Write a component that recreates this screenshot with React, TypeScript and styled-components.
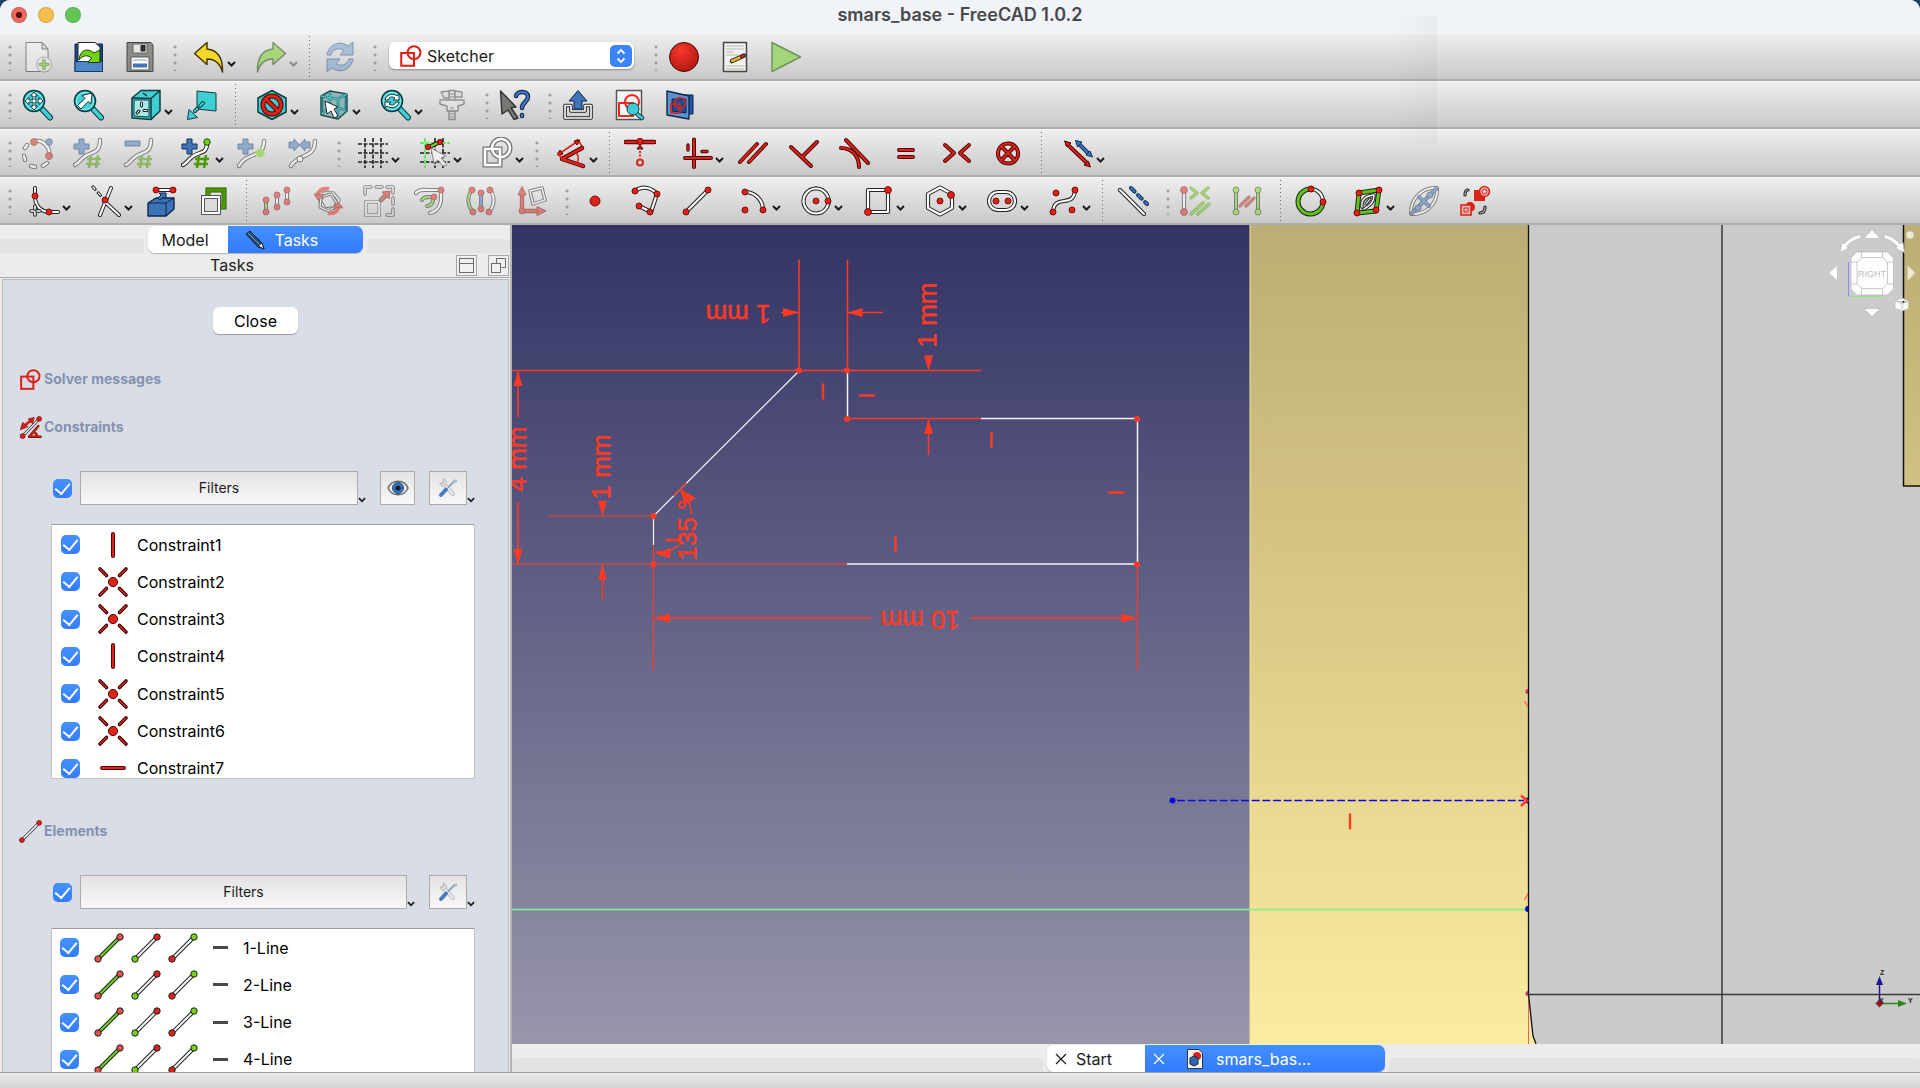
import React, { ReactNode } from 'react';
import styled, { createGlobalStyle, css } from 'styled-components';

const RED = '#dc2318';
const INK = '#1f2426';
const SKETCH = '#ff3a24';
const AQUA = '#3fcfd2';
const BLUE = '#3f74b8';
const GREEN = '#73d216';

const GlobalStyle = createGlobalStyle`
  * { box-sizing: border-box; }
  body {
    margin: 0;
    background: #1d4468;
    font-family: Inter, "Liberation Sans", sans-serif;
    font-size: 16px;
    line-height: 20px;
    color: #1b1b1b;
  }
  button, select, input { font: inherit; color: inherit; margin: 0; }
`;

/* ---------- window frame ---------- */

const Window = styled.div`
  display: flex;
  flex-direction: column;
  height: 100vh;
  overflow: hidden;
  background: #ececec;
  border-radius: 10px 10px 0 0;
`;

const Header = styled.header`
  position: relative;
  flex: none;
  &::after {
    content: '';
    position: absolute;
    top: 16px;
    bottom: 80px;
    right: 483px;
    width: 48px;
    pointer-events: none;
    background: linear-gradient(90deg, rgba(0, 0, 0, 0), rgba(0, 0, 0, 0.03));
  }
`;

const TitleBar = styled.div`
  display: grid;
  grid-template-columns: 1fr auto 1fr;
  align-items: center;
  height: 33px;
  padding: 0 11px 4px;
  background: #f0f3f7;
`;

const Lights = styled.div`
  display: flex;
  gap: 11px;
`;

const Light = styled.button<{ $fill: string }>`
  display: grid;
  place-items: center;
  width: 16px;
  height: 16px;
  padding: 0;
  border: 1px solid rgba(0, 0, 0, 0.12);
  border-radius: 50%;
  background: ${(p) => p.$fill};
`;

const LightDot = styled.span`
  width: 6px;
  height: 6px;
  border-radius: 50%;
  background: #5c0a06;
`;

const Title = styled.h1`
  margin: 0;
  font-size: 18px;
  line-height: 20px;
  font-weight: 600;
  color: #47494b;
`;

/* ---------- tool bars ---------- */

const ToolRow = styled.div`
  display: flex;
  align-items: center;
  height: 48px;
  padding-left: 2px;
  border-top: 1px solid #f6f6f6;
  border-bottom: 2px solid #aeaeae;
  background: linear-gradient(#eeeeee, #c9c9c9);
`;

const Handle = styled.span`
  flex: none;
  width: 12px;
  height: 28px;
  background: radial-gradient(circle, #a0a0a0 1px, transparent 2px) 6px 0 / 4px 8px repeat-y;
`;

const Divider = styled.span`
  flex: none;
  width: 13px;
  height: 42px;
  background: linear-gradient(#6a6a6a 1px, transparent 1px) 6px 0 / 1px 4px repeat-y;
`;

const ToolButton = styled.button<{ $menu?: boolean; $dim?: boolean }>`
  flex: none;
  display: flex;
  align-items: center;
  width: ${(p) => (p.$menu ? '62px' : '51px')};
  height: 40px;
  padding: 0;
  padding-left: ${(p) => (p.$menu ? '14px' : '8px')};
  border: 0;
  background: none;
  > svg:first-child { opacity: ${(p) => (p.$dim ? 0.5 : 1)}; }
`;

const Chevron = styled.svg`
  flex: none;
  width: 9px;
  height: 6px;
  fill: none;
  stroke: #1c1c1c;
  stroke-width: 2;
`;

const ToolChevron = styled(Chevron)<{ $dim?: boolean }>`
  margin: 14px 0 0 2px;
  opacity: ${(p) => (p.$dim ? 0.4 : 1)};
`;

const Workbench = styled.label`
  display: grid;
  grid-template-columns: 36px 1fr 22px;
  align-items: center;
  width: 245px;
  height: 27px;
  margin: 0 14px 2px 10px;
  padding: 0 2px 0 10px;
  border-radius: 6px;
  background: #fff;
  box-shadow: 0 1px 2px rgba(0, 0, 0, 0.35);
  > svg:first-child { grid-area: 1 / 1; }
`;

const WorkbenchSelect = styled.select`
  grid-area: 1 / 1 / 2 / 4;
  height: 27px;
  padding: 0 0 0 28px;
  border: 0;
  outline: 0;
  appearance: none;
  background: none;
`;

const Stepper = styled.svg`
  grid-area: 1 / 3;
  width: 22px;
  height: 22px;
  pointer-events: none;
`;

/* ---------- side panel ---------- */

const Body = styled.div`
  flex: 1;
  display: flex;
  min-height: 0;
`;

const Side = styled.aside`
  flex: 0 0 512px;
  display: flex;
  flex-direction: column;
  min-height: 0;
  border-right: 2px solid #b4b4b4;
`;

const TabStrip = styled.div`
  flex: none;
  display: flex;
  align-items: flex-end;
  justify-content: center;
  gap: 4px;
  height: 28px;
`;

const StripFill = styled.span`
  flex: 1;
  height: 14px;
  border-radius: 4px 4px 0 0;
  background: #e3e3e3;
`;

const Tabs = styled.div`
  display: flex;
  height: 27px;
  border-radius: 7px;
  overflow: hidden;
  box-shadow: 0 1px 1px rgba(0, 0, 0, 0.25);
`;

const Tab = styled.button<{ $active?: boolean; $width: number }>`
  display: flex;
  align-items: center;
  width: ${(p) => p.$width}px;
  padding: 0 14px;
  border: 0;
  background: #fff;
  ${(p) =>
    p.$active &&
    css`
      color: #fff;
      background: linear-gradient(#4390ff, #337bff);
    `}
`;

const PencilTab = styled(Tab)`
  gap: 10px;
  padding-left: 17px;
`;

const DocTab = styled(Tab)`
  padding: 0 8px;
  gap: 9px;
`;

const DocName = styled.span`
  margin-left: 4px;
`;

const DockTitle = styled.div`
  flex: none;
  display: grid;
  grid-template-columns: 1fr auto;
  align-items: center;
  height: 25px;
  border-bottom: 1px solid #a9a9a9;
  text-align: center;
  h2 { margin: 0; font-size: 16px; line-height: 20px; font-weight: 400; padding-left: 8px; }
`;

const DockButtons = styled.div`
  display: flex;
  gap: 11px;
  padding-right: 1px;
`;

const DockButton = styled.button`
  display: grid;
  place-items: center;
  width: 21px;
  height: 21px;
  padding: 0;
  border: 1px solid #a6a6a6;
  background: #f0f0f0;
`;

const Panel = styled.div`
  flex: 1;
  display: flex;
  flex-direction: column;
  min-height: 0;
  margin: 1px 1px 0 2px;
  padding: 27px 33px 0 16px;
  overflow: hidden;
  border: 1px solid #bcbcbc;
  border-bottom: 0;
  background: #d9dee6;
`;

const CloseButton = styled.button`
  flex: none;
  align-self: center;
  width: 85px;
  height: 27px;
  margin: 0 0 33px 17px;
  padding: 0;
  border: 0;
  border-radius: 6px;
  background: #fff;
  box-shadow: 0 1px 1px rgba(0, 0, 0, 0.3);
  color: #000;
`;

const Section = styled.h3`
  flex: none;
  display: flex;
  align-items: center;
  gap: 2px;
  height: 24px;
  margin: 0 0 24px;
  font-size: 14px;
  line-height: 20px;
  font-weight: 700;
  color: #8490b0;
`;

const FilterRow = styled.div`
  flex: none;
  display: flex;
  align-items: center;
  gap: 14px;
  height: 34px;
  margin: 8px 0 19px 34px;
`;

const FilterMain = styled.div`
  flex: 1;
  display: flex;
  align-items: center;
  gap: 8px;
`;

const Split = styled.div<{ $grow?: boolean }>`
  flex: ${(p) => (p.$grow ? 1 : 'none')};
  display: flex;
  align-items: flex-end;
  ${Chevron} { width: 8px; margin-bottom: 2px; }
`;

const PanelButton = styled.button<{ $width?: number }>`
  display: grid;
  place-items: center;
  flex: ${(p) => (p.$width ? `0 0 ${p.$width}px` : 1)};
  height: 34px;
  padding: 0;
  border: 1px solid #ababab;
  background: linear-gradient(#e3e3e3, #f8f8f8);
  font-size: 14px;
`;

const Check = styled.input`
  flex: none;
  display: grid;
  place-items: center;
  width: 19px;
  height: 19px;
  appearance: none;
  border-radius: 5px;
  background: #fff;
  &:checked { background: linear-gradient(#4492ff, #347cff); }
  &:checked::after {
    content: '';
    width: 7px;
    height: 12px;
    margin-bottom: 3px;
    border: solid #fff;
    border-width: 0 2px 2px 0;
    transform: rotate(40deg);
  }
`;

const ListBox = styled.div<{ $fill?: boolean }>`
  flex: ${(p) => (p.$fill ? '1' : '0 0 255px')};
  min-height: 0;
  overflow: hidden;
  margin: 0 0 ${(p) => (p.$fill ? 0 : 40)}px 32px;
  border: 1px solid #c2c2c2;
  border-top-color: #9d9d9d;
  ${(p) => p.$fill && 'border-bottom: 0;'}
  background: #fff;
`;

const Rows = styled.ul<{ $height: number; $inset: number }>`
  display: grid;
  grid-auto-rows: 1fr;
  height: ${(p) => p.$height}px;
  margin: 0;
  padding: ${(p) => p.$inset - 8}px 0 0 ${(p) => p.$inset}px;
  list-style: none;
  color: #000;
`;

const Row = styled.li`
  label { display: flex; align-items: center; height: 100%; }
`;

const ConstraintMark = styled.span`
  display: flex;
  margin: 0 8px 0 17px;
`;

const ElementMarks = styled.span`
  display: flex;
  gap: 5px;
  margin: 0 14px;
`;

const Dash = styled.span`
  width: 15px;
  height: 3px;
  margin-right: 15px;
  background: #4a4a4a;
`;

/* ---------- document area ---------- */

const Documents = styled.main`
  flex: 1;
  display: flex;
  flex-direction: column;
  min-width: 0;
`;

const Viewport = styled.div`
  position: relative;
  flex: 1;
  min-height: 0;
  overflow: hidden;
  background: #cbcbcb;
`;

const Scene = styled.svg`
  display: block;
  width: 100%;
  height: 100%;
  font-family: "Liberation Sans", sans-serif;
`;

const NavCube = styled.svg`
  position: absolute;
  top: 0;
  right: 0;
  font-family: "Liberation Sans", sans-serif;
`;

const StatusBar = styled.footer`
  flex: none;
  height: 16px;
  border-top: 1px solid #9c9c9c;
  background: linear-gradient(#ebebeb, #d4d4d4);
`;

/* ---------- drawing helpers ---------- */

type LineProps = { d: string; c?: string; w?: number; o?: string; dash?: string };
const L = ({ d, c = '#fff', w = 2, o = INK, dash }: LineProps) => (
  <g fill="none" strokeLinecap="round" strokeLinejoin="round" strokeDasharray={dash}>
    <path d={d} stroke={o} strokeWidth={w + 2} />
    <path d={d} stroke={c} strokeWidth={w} />
  </g>
);
const D = ({ x, y, r = 3, c = RED, o = '#7d0a05' }: { x: number; y: number; r?: number; c?: string; o?: string }) => (
  <circle cx={x} cy={y} r={r} fill={c} stroke={o} />
);
const Svg = ({ children, s = 32 }: { children: ReactNode; s?: number }) => (
  <svg width={s} height={s} viewBox="0 0 32 32" fill="none" aria-hidden="true">
    {children}
  </svg>
);
const P = ({ d, f, s = INK, w = 1 }: { d: string; f: string; s?: string; w?: number }) => (
  <path d={d} fill={f} stroke={s} strokeWidth={w} strokeLinejoin="round" />
);
const R = { c: RED, o: '#4d0500', w: 2 };
const Lens = () => (
  <>
    <L d="M20 20 L28 28.500" c={AQUA} w={4} o="#0c3b40" />
    <circle cx="12" cy="12" r="10.500" fill={AQUA} stroke="#0c3b40" strokeWidth="1.500" />
    <circle cx="12" cy="12" r="8.500" fill="none" stroke="#8eeff0" />
  </>
);
const Plus = ({ minus }: { minus?: boolean }) => (
  <P d={minus ? 'M1 4 H16 V9 H1 Z' : 'M6 2 h5 v5 h5 v5 h-5 v5 h-5 v-5 h-5 v-5 h5 Z'} f={BLUE} s="#12305c" />
);
const Hash = () => (
  <path d="M18 18 l-2 13 M25 18 l-2 13 M14 22 H28 M13 27 H27" stroke="#4e9a06" strokeWidth="2.600" />
);
const SketchMark = () => (
  <g stroke={RED} strokeWidth="2.800">
    <rect x="3" y="12" width="17" height="17" />
    <circle cx="20" cy="11.500" r="8.500" />
  </g>
);

const icons: Record<string, ReactNode> = {
  file: (
    <>
      <P d="M4 1.500 H20 L26 8 V30.500 H4 Z" f="#f4f4f4" />
      <P d="M20 1.500 V8 H26 Z" f="#ccc" />
      <circle cx="22" cy="23.500" r="7.500" fill="#f4f4f4" stroke="#777" />
      <L d="M22 19.500 V27.500 M18 23.500 H26" c={GREEN} w={1.5} o="#397004" />
    </>
  ),
  open: (
    <>
      <P d="M2 3 H29.500 V30.500 H2 Z" f="#204a87" s="#0f274b" />
      <P d="M5 1.500 H22 L27 6 V22 H5 Z" f="#fff" />
      <P d="M2 20.500 H29.500 V30.500 H2 Z" f="#4f86c6" s="#16386b" />
      <P d="M6 19 C7 8 15 7 21 12 L27 9 V21.500 H15 L18.500 17 C14 13 9 15 6 19 Z" f={GREEN} s="#173a02" />
    </>
  ),
  save: (
    <>
      <P d="M3 1.500 H27 L29 4 V30.500 H3 Z" f="#8b8e88" s="#44473f" />
      <P d="M9 3 H23 V12 H9 Z" f="#e6e6e6" s="#666" />
      <P d="M17 4.500 H21 V10 H17 Z" f="#333" />
      <P d="M7 16 H25 V29 H7 Z" f="#fafafa" s="#555" />
      <path d="M9 19 H23" stroke="#999" />
      <path d="M9 24.500 H23" stroke={BLUE} strokeWidth="4" />
    </>
  ),
  undo: <P d="M1.500 12.500 L14 1.500 V8 C24 9 30 15 29.500 31 C27 22 22 18 14 18 V23.500 Z" f="#f5d727" s="#3d3300" w={1.4} />,
  redo: <P d="M30.500 12.500 L18 1.500 V8 C8 9 2 15 2.500 31 C5 22 10 18 18 18 V23.500 Z" f="#73d216" s="#1a3d02" w={1.4} />,
  refresh: (
    <>
      <P d="M3 14 C5 3 16 -1 24 5 L29 1 V14 H16 L20 9.500 C15 6 9 8 7 14 Z" f="#729fcf" s="#204a87" />
      <P d="M29 18 C27 29 16 33 8 27 L3 31 V18 H16 L12 22.500 C17 26 23 24 25 18 Z" f="#729fcf" s="#204a87" />
    </>
  ),
  record: <circle cx="16" cy="16" r="14.500" fill="url(#redBall)" stroke="#4d0500" />,
  macro: (
    <>
      <P d="M4.500 1.500 H27.500 V30.500 H4.500 Z" f="#f1f1ef" s="#444" w={1.5} />
      <path d="M7 5 H25 M7 8 H25 M7 11 H15 M7 14 H20 M7 25 H25 M7 28 H25" stroke="#b6b8b2" />
      <L d="M13 20 L21 16.500" c="#e8b31d" w={2.6} />
      <L d="M23 15.500 L25 14.500" c={RED} w={2.2} />
    </>
  ),
  play: <P d="M2 1.500 L30.500 16 L2 30.500 Z" f="#a3d67a" s="#71945a" w={1.5} />,
  fitAll: (
    <>
      <Lens />
      <P d="M12 3 L15.500 7 H13 V11 H17 V8.500 L21 12 L17 15.500 V13 H13 V17 H15.500 L12 21 L8.500 17 H11 V13 H7 V15.500 L3 12 L7 8.500 V11 H11 V7 H8.500 Z" f="#fff" s="#12343a" />
    </>
  ),
  fitSel: (
    <>
      <Lens />
      <P d="M19 4 L18 15 L15 12.500 L8 20 L4.500 16.500 L12 9.500 L9 6.500 Z" f="#fff" s="#12343a" />
    </>
  ),
  cube: (
    <>
      <P d="M2 9 L11 1.500 H30 V22 L21 30.500 L2 29 Z" f={AQUA} s="#0c3b40" w={1.5} />
      <P d="M4 11 H19 V28 L4 27 Z" f="#a9e9ea" s="#0c3b40" />
      <path d="M2 9 L21 9.500 L30 1.500 M21 9.500 V30 M13 4 L17 7" stroke="#0c3b40" strokeWidth="1.500" />
      <L d="M11.500 14 V17 M7 24 L9 22 M14 21.500 H17" w={1} />
    </>
  ),
  plane: (
    <>
      <P d="M11 2 L30 4 V22 L11 20 Z" f={AQUA} s="#0c3b40" />
      <L d="M17 14 L9 22" c={AQUA} o="#0c3b40" dash="4 4" />
      <P d="M1.500 30.500 L3 20.500 L11.500 28.500 Z" f={AQUA} s="#0c3b40" />
    </>
  ),
  drawStyle: (
    <>
      <P d="M16 1.500 L30 9 V23 L16 30.500 L2 23 V9 Z" f={AQUA} s="#0c3b40" w={1.5} />
      <g fill="none">
        <circle cx="16" cy="16" r="9" stroke="#4d0500" strokeWidth="5" />
        <path d="M10 10 L22 22" stroke="#4d0500" strokeWidth="5" />
        <circle cx="16" cy="16" r="9" stroke={RED} strokeWidth="3" />
        <path d="M10 10 L22 22" stroke={RED} strokeWidth="3" />
      </g>
    </>
  ),
  selView: (
    <>
      <P d="M3 7 L12 2 L29 5 V22 L20 30 L3 26 Z" f="#8fb7b8" s="#1d5054" w={1.5} />
      <path d="M3 7 L20 10 L29 5 M20 10 V29 M12 3 V17 L4 25 M12 17 L28 21 M4 8 V25 M28 6 V21" stroke="#2b7478" strokeWidth="2.600" />
      <path d="M3 7 L20 10 L29 5 M20 10 V29 M12 3 V17 L4 25 M12 17 L28 21" stroke="#52c9cc" strokeWidth="1.200" />
      <P d="M7 12 L20 18 L16 20 L20 27 L16 29 L13 22 L9 25 Z" f="#fff" />
    </>
  ),
  zoomMenu: (
    <>
      <Lens />
      <P d="M5 11 C6 5 14 4 17 7 L19 5 V11 H13 L15 9 C12 7 9 8 8 11 Z" f="#fff" s="#12343a" />
      <P d="M19 13 C18 19 10 20 7 17 L5 19 V13 H11 L9 15 C12 17 15 16 16 13 Z" f="#fff" s="#12343a" />
    </>
  ),
  caliper: (
    <>
      <P d="M13 1.500 H19 V30.500 H13 Z" f="#d6d6d6" s="#444" w={1.4} />
      <P d="M5 3 L13 2 V9 H8 Z M19 2 L26 3 V8 H19 Z" f="#d6d6d6" s="#444" w={1.4} />
      <P d="M4 11 H28 V15 L22 17 V22 H11 V17 L4 15 Z" f="#e6e6e6" s="#444" w={1.4} />
      <path d="M14 19 H18 M14 22 H18 M14 25 H18 M14 28 H18 M14 5 H18 M14 8 H18" stroke="#444" />
    </>
  ),
  whats: (
    <>
      <P d="M1.500 2 L17 18 L12 18.500 L19 29 L15 30.500 L9 21 L3 25 Z" f="#777975" s="#2e3033" w={1.4} />
      <L d="M17 7 C18 2 29 1 29 8 C29 13 23 13 23 19 M23 26 V27" c={BLUE} w={2.6} o="#0f274b" />
    </>
  ),
  leave: (
    <>
      <L d="M9 16.500 H3 V29 H29 V16.500 H23 M9 16.500 V22 H23 V16.500" w={1.6} />
      <P d="M16 1.500 L25 12 H20 V20 H12 V12 H7 Z" f={BLUE} s="#0f274b" />
    </>
  ),
  viewSketch: (
    <>
      <P d="M3.500 1.500 H28.500 V30.500 H3.500 Z" f="#f6f6f6" s="#555" w={1.5} />
      <g stroke="#f02a20" strokeWidth="2">
        <rect x="6" y="14" width="14" height="13" />
        <circle cx="19" cy="13" r="7" />
      </g>
      <L d="M24 25 L29 29" c={AQUA} w={2.4} o="#0c3b40" />
      <circle cx="20" cy="20" r="6" fill={AQUA} stroke="#0c3b40" />
    </>
  ),
  section: (
    <>
      <P d="M16 6 H29 V25 H16 Z" f="#1f57a4" s="#0b2448" />
      <P d="M3 2 L25 7 V30 L3 26 Z" f="#5b93d2" s="#0f274b" w={1.4} />
      <P d="M8 10 L22 10 V24 L8 22 Z" f="#1b4d94" s="#0b2448" />
      <g stroke={RED} strokeWidth="1.600">
        <rect x="7" y="15" width="9" height="9" />
        <circle cx="16" cy="14" r="5.500" />
      </g>
    </>
  ),
  reorient: (
    <>
      <L d="M14 4 C20 3 27 8 27.500 17 M5 8 L3 11 M2 19 L3 23 M9 29 L13 30 M21 29 L25 26" w={2.4} />
      <D x={12} y={5} r={3.4} />
      <D x={27} y={19} r={3.4} />
      <D x={27} y={5} r={3.2} c={BLUE} o="#12305c" />
    </>
  ),
  addHash: (
    <>
      <L d="M27 3 C27 18 18 14 11 20 C7 23 6 26 2 28" w={2.4} />
      <Plus />
      <Hash />
    </>
  ),
  removeHash: (
    <>
      <L d="M27 3 C27 18 18 14 11 20 C7 23 6 26 2 28" w={2.4} />
      <Plus minus />
      <Hash />
    </>
  ),
  addPole: (
    <>
      <L d="M26 6 C26 18 18 14 11 20 C7 23 6 26 2 28" w={2.4} />
      <Plus />
      <Hash />
      <D x={26} y={5} r={3.2} c={GREEN} o="#1d4a02" />
    </>
  ),
  knot: (
    <>
      <L d="M27 4 C27 22 10 14 2 29" w={2.4} />
      <Plus />
      <D x={23} y={16} r={4.2} c={GREEN} o="#8ae234" />
    </>
  ),
  joinCurves: (
    <>
      <L d="M27 4 C27 22 10 16 3 29" w={2.4} />
      <P d="M1 5 H6 V2 L11.500 8 L6 14 V11 H1 Z M22 5 H17 V2 L11.500 8 L17 14 V11 H22 Z" f={BLUE} s="#12305c" />
      <D x={12} y={22} r={3} c="#fff" o={INK} />
    </>
  ),
  grid: <path d="M8 1 V31 M16 1 V31 M24 1 V31 M1 7 H31 M1 16 H31 M1 25 H31" stroke="#222" strokeWidth="1.600" strokeDasharray="4 1.500" />,
  snap: (
    <>
      <path d="M16 1 V31 M24 1 V31 M1 16 H31 M1 25 H31" stroke="#222" strokeWidth="1.600" strokeDasharray="4 1.500" />
      <path d="M6 1 V31 M1 6 H31" stroke="#3df03d" strokeWidth="1.600" strokeDasharray="4 1.500" />
      <L d="M10 10 L21 5" c={GREEN} w={2.4} />
      <D x={9} y={10} r={2.6} />
      <D x={21} y={5} r={2.6} />
      <P d="M12 11 L27 19 L22 21 L28 28 L24 29 L19 23 L15 26 Z" f="#eee" s="#888" />
    </>
  ),
  renderOrder: (
    <>
      <g stroke="#777" strokeWidth="5"><rect x="4" y="12" width="15" height="16" /><circle cx="20" cy="11" r="9" /></g>
      <g stroke="#fff" strokeWidth="2.500"><rect x="4" y="12" width="15" height="16" /><circle cx="20" cy="11" r="9" /></g>
    </>
  ),
  dimension: (
    <>
      <path d="M5 20 L3 15 M22 2 L27 9 M4 17 L23 4" stroke={RED} strokeWidth="1.600" />
      <P d="M2.500 18 L5 13 L8 17 Z M25 3 L19 4 L22 8 Z" f={RED} s="#4d0500" />
      <L d="M27 11 L7 22 L28 29" {...R} w={2.4} />
      <path d="M20 15 C24 18 24 22 22 26 M3 15 L7 22" stroke={RED} strokeWidth="1.600" />
    </>
  ),
  pointOn: (
    <>
      <L d="M1.500 5 H30.500" {...R} w={2.4} />
      <D x={16} y={4.5} r={3.2} />
      <P d="M16 8 L19 12 H13 Z" f={RED} s="#4d0500" />
      <path d="M16 14 V21" stroke={RED} strokeWidth="2" strokeDasharray="2 1.500" />
      <circle cx="16" cy="25.500" r="3" stroke={RED} strokeWidth="2" />
    </>
  ),
  horVert: (
    <>
      <L d="M13 2.500 V30" {...R} w={2} />
      <L d="M4 21 H30" {...R} w={2} />
      <L d="M7 8 V13 M21 14.500 H26" {...R} w={1.4} />
    </>
  ),
  parallel: <L d="M3 25 L20 7 M12 25 L29 7" {...R} />,
  perpendicular: <L d="M29 5 L15 19 M3 10 L23 29" {...R} />,
  tangent: <L d="M7 3 L29 26 M2 11 C13 11 20 19 20 30" {...R} />,
  equal: <L d="M9 13 H23 M9 20 H23" {...R} />,
  symmetric: <L d="M4 8 L13 16 L4 24 M28 8 L19 16 L28 24" {...R} />,
  block: <L d="M16 6.500 A10 10 0 1 0 16.100 6.500 M9.500 9.500 L22.500 23 M22.500 9.500 L9.500 23" {...R} />,
  toggle: (
    <>
      <L d="M5 7 L26 27" {...R} />
      <P d="M2.500 4 L9 6 L5 10 Z M28.500 30 L22 28 L26 24 Z" f={RED} s="#4d0500" />
      <L d="M17 7 L27 17" c={BLUE} o="#12305c" />
      <P d="M13.500 3.500 L20 5 L15.500 10 Z M30.500 20 L24 18 L28 14 Z" f={BLUE} s="#12305c" />
    </>
  ),
  fillet: (
    <>
      <L d="M7 3 V11 C7 21 13 27 22 27 H30" />
      <L d="M7 21 V31 M3 26 H12" w={1.6} dash="3 3" />
      <D x={7} y={11} />
      <D x={21} y={27} />
    </>
  ),
  trim: (
    <>
      <L d="M21 3 L10 30 M14 16 L29 30" />
      <L d="M3 2 L11 11" w={1.2} dash="3 5" />
      <D x={15} y={15} />
    </>
  ),
  external: (
    <>
      <P d="M2 18 L10 13 H28 V24 L20 31 H2 Z" f="#3b73b9" s="#0f274b" w={1.4} />
      <path d="M2 18 H20 L28 13 M20 18 V31" stroke="#0f274b" />
      <L d="M10 5 H27" />
      <D x={10} y={5} />
      <D x={27} y={5} />
      <P d="M20 8 V14 L17 12 L14 15 L12 13 L15 10 L13 8 Z" f={BLUE} s="#0f274b" />
    </>
  ),
  carbon: (
    <>
      <rect x="11" y="5" width="16" height="17" stroke="#204d02" strokeWidth="5" />
      <rect x="11" y="5" width="16" height="17" stroke="#4e9a06" strokeWidth="3.400" />
      <rect x="6" y="12" width="16" height="16" fill="#dcdcdc" stroke="#555" strokeWidth="4" />
      <rect x="6" y="12" width="16" height="16" stroke="#fff" strokeWidth="2" />
    </>
  ),
  arrayCopy: (
    <>
      <L d="M5 15 V27" c={GREEN} />
      <L d="M16 10 V22 M26 5 V17" />
      <D x={5} y={15} /><D x={5} y={27} /><D x={16} y={10} /><D x={16} y={22} /><D x={26} y={5} /><D x={26} y={17} />
    </>
  ),
  rotate: (
    <>
      <L d="M12 8 L21 8 L27 15 L22 23 L13 24 L8 16 Z" w={1.6} />
      <L d="M9 12 L19 9 L26 20 L16 26 L8 22 Z" w={1.2} />
      <path d="M5 11 C7 4 12 3 17 4" stroke={RED} strokeWidth="4" />
      <path d="M27 21 C25 28 20 29 16 28" stroke={RED} strokeWidth="4" />
      <P d="M2 9 L12 10 L6 15 Z M31 23 L21 22 L26 17 Z" f={RED} s="#7d0a05" />
    </>
  ),
  scale: (
    <>
      <L d="M2 9 V2 H8 M13 2 H19 M24 2 H30 V8 M30 13 V19 M30 24 V30 H24" w={1.4} />
      <rect x="3" y="17" width="13" height="13" stroke="#555" strokeWidth="3.600" />
      <rect x="3" y="17" width="13" height="13" stroke="#fff" strokeWidth="1.600" />
      <L d="M18 15 L23 10" c={RED} w={2.6} />
      <P d="M27 6 L26 14 L19 7 Z" f={RED} s="#7d0a05" />
    </>
  ),
  offset: (
    <>
      <L d="M2 8 C5 4 9 5 13 5 H27 V13 C27 22 22 27 16 28" w={2.2} />
      <L d="M8 15 C10 11 14 12 19 12 C20 17 17 21 13 21" c={GREEN} />
      <D x={27} y={5} /><D x={20} y={12} />
    </>
  ),
  mirror: (
    <>
      <L d="M7 5 C2 11 2 20 8 27" c={GREEN} />
      <L d="M25 5 C30 11 30 20 24 27" />
      <L d="M16 8 V24" c={BLUE} o="#12305c" />
      <D x={7} y={5} /><D x={8} y={27} /><D x={25} y={5} /><D x={24} y={27} /><D x={16} y={8} /><D x={16} y={24} />
    </>
  ),
  removeAxes: (
    <>
      <L d="M6 26 V8 M6 26 H23" c={RED} o="#7d0a05" w={2.4} />
      <P d="M6 1.500 L10 10 H2 Z M30 26 L21 30.500 V21.500 Z" f={RED} s="#7d0a05" />
      <L d="M14 6 L26 3 L29 15 L17 19 Z" w={1.4} />
      <D x={6} y={26} />
    </>
  ),
  point: <D x={16} y={16} r={5} />,
  polyline: (
    <>
      <L d="M5 6 C13 0 22 3 27 9 L21 27 L9 21" w={2.2} />
      <D x={5} y={6} /><D x={27} y={9} /><D x={20} y={27} /><D x={9} y={21} />
    </>
  ),
  line: (
    <>
      <L d="M5 27 L27 5" w={2.2} />
      <D x={5} y={27} /><D x={27} y={5} />
    </>
  ),
  arc: (
    <>
      <L d="M7 7 C17 7 25 15 25 25" w={2.2} />
      <D x={7} y={7} /><D x={25} y={25} /><D x={7} y={25} />
    </>
  ),
  circle: (
    <>
      <L d="M16 3.500 A12.500 12.500 0 1 0 16.100 3.500" w={2.2} />
      <D x={16} y={16} /><D x={28} y={16} />
    </>
  ),
  rectangle: (
    <>
      <L d="M6 5 H26 V27 H6 Z" w={2.2} />
      <D x={26} y={5} r={3.4} /><D x={6} y={27} r={3.4} />
    </>
  ),
  polygon: (
    <>
      <L d="M16 2.500 L28 9 V23 L16 29.500 L4 23 V9 Z" w={2.2} />
      <D x={27} y={10} r={3.4} /><D x={16} y={16} />
    </>
  ),
  slot: (
    <>
      <L d="M12 7 H20 A9 9 0 0 1 20 25 H12 A9 9 0 0 1 12 7 Z" w={2.2} />
      <D x={10} y={16} /><D x={22} y={16} />
    </>
  ),
  bspline: (
    <>
      <L d="M5 27 C6 8 26 24 27 5" w={2.2} />
      <D x={5} y={27} /><D x={27} y={5} /><D x={8} y={8} /><D x={24} y={25} />
    </>
  ),
  construction: (
    <>
      <L d="M3 5 L27 29" w={2.2} />
      <L d="M14 3 L30 19" c={BLUE} o="#12305c" dash="5 5" />
    </>
  ),
  selectConstraints: (
    <>
      <L d="M4 5 V27" w={2.2} />
      <L d="M11 3 L17 8 L11 13 M28 3 L22 8 L28 13 M11 29 L23 18 M18 29 L29 19" c={GREEN} o="#4e9a06" w={1.4} />
      <D x={4} y={5} r={3.4} /><D x={4} y={27} r={3.4} />
    </>
  ),
  selectElements: (
    <>
      <L d="M5 5 V27 M27 5 V27" c={GREEN} />
      <L d="M9 21 L18 12 M15 21 L23 13" c={RED} o="#a03028" w={1.2} />
      <D x={5} y={5} c={GREEN} o="#1d4a02" /><D x={5} y={27} c={GREEN} o="#1d4a02" />
      <D x={27} y={5} c={GREEN} o="#1d4a02" /><D x={27} y={27} c={GREEN} o="#1d4a02" />
    </>
  ),
  ring: (
    <>
      <L d="M16 4 A12.500 12.500 0 1 0 28 17" c="#5fc414" w={3} />
      <L d="M16 4 C22 4 28 9 28 17" w={2.2} />
      <D x={16} y={4} /><D x={28} y={17} />
    </>
  ),
  internal: (
    <>
      <L d="M7 8 L27 5 L24 26 L5 28 Z" c="#5fc414" w={3} />
      <L d="M10 22 C9 14 14 11 22 10 C22 18 18 20 12 24" w={1.4} />
      <L d="M14 19 L18 14" w={1.2} />
      <D x={7} y={8} /><D x={27} y={5} /><D x={24} y={25} /><D x={5} y={28} />
    </>
  ),
  ellipse: (
    <>
      <L d="M3 29 C2 13 15 2 29 3 C30 18 19 30 3 29 Z" w={1.8} />
      <L d="M4 28 L28 4 M11 12 L21 21" c={BLUE} o="#12305c" w={2} />
      <D x={22} y={10} c={BLUE} o="#12305c" /><D x={10} y={23} c={BLUE} o="#12305c" />
    </>
  ),
  switchSpace: (
    <>
      <rect x="16" y="6" width="9" height="9" fill={RED} stroke={RED} strokeWidth="2" />
      <circle cx="25.500" cy="6.500" r="5" fill="#eebcb8" stroke={RED} strokeWidth="1.600" />
      <circle cx="25.500" cy="6.500" r="2.500" fill="#eebcb8" stroke={RED} />
      <circle cx="11" cy="22" r="5" fill={RED} />
      <rect x="2" y="20" width="10" height="10" fill="#eebcb8" stroke={RED} strokeWidth="1.600" />
      <rect x="5" y="23" width="4" height="4" stroke={RED} />
      <L d="M6 10 C6 6 7 5 9 5 M26 22 C26 26 24 28 21 28" c="#aaa" w={1.2} />
    </>
  ),
};

const lineIcon = (bar: string, a: string, b: string) => (
  <svg width="32" height="32" viewBox="0 0 32 32" fill="none" aria-hidden="true">
    <L d="M5 27 L27 5" c={bar} w={2} />
    <D x={5} y={27} r={3.2} c={a} o={INK} />
    <D x={27} y={5} r={3.2} c={b} o={INK} />
  </svg>
);

/* ---------- tool bar contents ---------- */

type Item = 'handle' | 'sep' | { icon: string; label: string; menu?: boolean; dim?: boolean };
const t = (icon: string, label: string, dim = false): Item => ({ icon, label, dim });
const m = (icon: string, label: string, dim = false): Item => ({ icon, label, dim, menu: true });

const fileTools: Item[] = [
  'handle', t('file', 'New', true), t('open', 'Open'), t('save', 'Save'),
  'handle', m('undo', 'Undo'), m('redo', 'Redo', true), 'sep', t('refresh', 'Refresh', true), 'handle',
];
const macroTools: Item[] = ['handle', t('record', 'Record macro'), t('macro', 'Macros'), t('play', 'Execute macro')];
const viewTools: Item[] = [
  'handle', t('fitAll', 'Fit all'), t('fitSel', 'Fit selection'), m('cube', 'Isometric'), t('plane', 'Align view'), 'sep',
  m('drawStyle', 'Draw style'), m('selView', 'Selection view'), m('zoomMenu', 'Sync view'), t('caliper', 'Measure', true),
  'handle', t('whats', 'Help'), 'handle', t('leave', 'Leave sketch'), t('viewSketch', 'View sketch'), t('section', 'View section'),
];
const constraintTools: Item[] = [
  'handle', t('reorient', 'Modify degree', true), t('addHash', 'Increase degree', true), t('removeHash', 'Decrease degree', true),
  m('addPole', 'Multiplicity'), t('knot', 'Insert knot', true), t('joinCurves', 'Join curves', true),
  'handle', m('grid', 'Grid'), m('snap', 'Snap'), m('renderOrder', 'Rendering order'),
  'handle', m('dimension', 'Dimension'), 'sep', t('pointOn', 'Coincident'), m('horVert', 'Horizontal/vertical'),
  t('parallel', 'Parallel'), t('perpendicular', 'Perpendicular'), t('tangent', 'Tangent'), t('equal', 'Equal'),
  t('symmetric', 'Symmetric'), t('block', 'Block'), 'sep', m('toggle', 'Toggle constraint'),
];
const geometryTools: Item[] = [
  'handle', m('fillet', 'Fillet'), m('trim', 'Trim'), t('external', 'External geometry'), t('carbon', 'Carbon copy'), 'sep',
  t('arrayCopy', 'Array', true), t('rotate', 'Rotate', true), t('scale', 'Scale', true), t('offset', 'Offset', true),
  t('mirror', 'Symmetry', true), t('removeAxes', 'Remove alignment', true),
  'handle', t('point', 'Point'), t('polyline', 'Polyline'), t('line', 'Line'), m('arc', 'Arc'), m('circle', 'Circle'),
  m('rectangle', 'Rectangle'), m('polygon', 'Polygon'), m('slot', 'Slot'), m('bspline', 'B-spline'), 'sep',
  t('construction', 'Construction geometry'), 'handle', t('selectConstraints', 'Select constraints', true),
  t('selectElements', 'Select elements', true), 'sep', t('ring', 'Arc overlay'), m('internal', 'Internal geometry'),
  t('ellipse', 'Hide internal geometry', true), t('switchSpace', 'Virtual space'),
];

const ChevronPath = () => <path d="M1 1 L4.500 4.500 L8 1" />;

const Tools = ({ items }: { items: Item[] }) => (
  <>
    {items.map((it, i) => {
      if (it === 'handle') return <Handle key={i} />;
      if (it === 'sep') return <Divider key={i} />;
      return (
        <ToolButton key={i} $menu={it.menu} $dim={it.dim} aria-label={it.label}>
          <Svg>{icons[it.icon]}</Svg>
          {it.menu && (
            <ToolChevron viewBox="0 0 9 6" $dim={it.dim}>
              <ChevronPath />
            </ToolChevron>
          )}
        </ToolButton>
      );
    })}
  </>
);

/* ---------- side panel parts ---------- */

const WrenchIcon = () => (
  <svg width="20" height="20" viewBox="0 0 20 20" fill="none" aria-hidden="true">
    <path d="M5 5 L15 16" stroke="#b5b5b5" strokeWidth="4" strokeLinecap="round" />
    <path d="M5 5 L15 16" stroke="#e9e9e9" strokeWidth="2.400" strokeLinecap="round" />
    <path d="M2 5 C2 9 7 9 8 6 C9 3 7 1 5 1 L6 4 L4 6 Z" fill="#e2e2e2" stroke="#b5b5b5" />
    <path d="M10 9.500 L17 2.500" stroke="#87a5c9" strokeWidth="2" />
    <path d="M16 1.500 H19 V4 L17 5" fill="#a9c0dc" />
    <path d="M3 17 L8 11.500" stroke="#4a7dc0" strokeWidth="4" strokeLinecap="round" />
  </svg>
);

const EyeIcon = () => (
  <svg width="22" height="18" viewBox="0 0 22 18" fill="none" aria-hidden="true">
    <path d="M1 9 C5 0 17 0 21 9 C17 18 5 18 1 9 Z" fill="#f1f1ec" stroke="#6d6f6a" strokeWidth="1.500" />
    <circle cx="11" cy="9" r="5.500" fill="#3a74bd" stroke="#204a87" />
    <circle cx="11" cy="9" r="2.600" fill="#14202e" />
  </svg>
);

const Filters = ({ id, eye }: { id: string; eye?: boolean }) => (
  <FilterRow>
    <FilterMain>
      <Check type="checkbox" defaultChecked id={id} aria-label="Filters" />
      <Split $grow>
        <PanelButton>Filters</PanelButton>
        <Chevron viewBox="0 0 9 6"><ChevronPath /></Chevron>
      </Split>
    </FilterMain>
    {eye && <PanelButton $width={35} aria-label="Show"><EyeIcon /></PanelButton>}
    <Split>
      <PanelButton $width={38} aria-label="Settings"><WrenchIcon /></PanelButton>
      <Chevron viewBox="0 0 9 6"><ChevronPath /></Chevron>
    </Split>
  </FilterRow>
);

const marks: Record<string, ReactNode> = {
  v: <L d="M16 5 V27" {...R} w={2} />,
  h: <L d="M5 16 H27" {...R} w={2} />,
  x: (
    <>
      <L d="M3 3 L9.500 9.500 M29 3 L22.500 9.500 M3 29 L9.500 22.500 M29 29 L22.500 22.500" c={RED} o="#260402" w={1.6} />
      <D x={16} y={16} r={4.6} o="#4d0500" />
    </>
  ),
};
const constraints = ['v', 'x', 'x', 'v', 'x', 'x', 'h'];
const elements = ['1-Line', '2-Line', '3-Line', '4-Line'];

/* ---------- 3D view ---------- */

const Dim = ({ x, y, a, children }: { x: number; y: number; a: number; children: string }) => (
  <text
    x={x}
    y={y}
    transform={`rotate(${a} ${x} ${y})`}
    textAnchor="middle"
    fontSize="26"
    fill={SKETCH}
    stroke={SKETCH}
    strokeWidth="0.500"
  >
    {children}
  </text>
);

const SketchView = () => (
  <Scene viewBox="512 225 1408 819" preserveAspectRatio="xMinYMin slice">
    <defs>
      <linearGradient id="sky" x1="0" y1="0" x2="0" y2="1">
        <stop offset="0" stopColor="#333365" />
        <stop offset="1" stopColor="#9796ab" />
      </linearGradient>
      <linearGradient id="sand" gradientUnits="userSpaceOnUse" x1="0" y1="225" x2="0" y2="1044">
        <stop offset="0" stopColor="#bcad74" />
        <stop offset="0.500" stopColor="#dccb88" />
        <stop offset="1" stopColor="#fceca0" />
      </linearGradient>
      <radialGradient id="redBall" cx="0.400" cy="0.300" r="0.800">
        <stop offset="0" stopColor="#f8372c" />
        <stop offset="1" stopColor="#a8160e" />
      </radialGradient>
    </defs>
    <rect x="512" y="225" width="738" height="819" fill="url(#sky)" />
    <path d="M1250 225 H1528 V994 L1532 1034 L1536 1044 H1250 Z" fill="url(#sand)" />
    <path d="M1250 225 V1044" stroke="#f5e68c" />
    <rect x="1904" y="225" width="16" height="261" fill="url(#sand)" />
    <path d="M1903.500 225 V486 H1920" fill="none" stroke="#111" strokeWidth="1.500" />
    <path d="M1722 225 V1044 M1529 994.500 H1920" stroke="#3d3b39" strokeWidth="1.500" />
    <path d="M1528.500 994 V1044" stroke="#dd6a5c" />
    <path d="M1528.500 225 V994 L1533 1036 L1536 1044" fill="none" stroke="#111" strokeWidth="1.300" />

    <path d="M512 909.500 H1528" stroke="#7ef387" strokeWidth="1.300" />
    <path d="M1177 800.500 H1524" stroke="#0a0ae0" strokeWidth="1.300" strokeDasharray="8 2.667" />
    <circle cx="1172.500" cy="800.500" r="3" fill="#0a0ae0" />
    <path d="M1528 797.500 a3 3 0 0 0 0 6 Z M1528 906 a3 3 0 0 0 0 6 Z" fill="#0a0ac0" />
    <path d="M1528 689 a2.500 2.500 0 0 0 0 5 Z M1528 991 a2.500 2.500 0 0 0 0 5 Z" fill="#c4306a" />
    <path d="M1521 795.500 L1527 800.500 L1521 806" fill="none" stroke={SKETCH} strokeWidth="2.400" />
    <path d="M1524.500 701 L1528 707 M1524.500 900 L1528 893.500" stroke={SKETCH} />

    <g stroke="#f4f4f8" strokeWidth="1.500" fill="none">
      <path d="M847.500 371 V419 M981 418.500 H1137.500 V564 H847" />
      <path d="M653.500 516 V545 M653.500 516 L799 371" strokeWidth="1.200" />
    </g>
    <g stroke={SKETCH} strokeWidth="1.500" fill="none">
      <path d="M799 259.500 V371 M847.500 259.500 V371 M512 370.500 H981 M847.500 418.500 H981" />
      <path d="M512 564 H847 M549 516 H653.500 M653.500 545 V671 M1137.500 564 V671" strokeWidth="1.200" />
      <path d="M653.500 618 H871 M971 618 H1137.500" />
      <path d="M781 312.500 H799 M847.500 312.500 H883 M928.500 419 V455 M602.500 565 V600" />
      <path d="M518 371 V417 M518 502 V564 M673.500 496 L686.500 483" />
      <path d="M680 489 Q691 500 691.500 515 M656 552 Q671 552 679 545" />
    </g>
    <g stroke={SKETCH} strokeWidth="2.400">
      <path d="M823 383.500 V399.500 M991.500 432 V448 M895.500 536 V552 M1350 813.500 V829.500" />
      <path d="M859 395.500 H875 M1108.500 492.500 H1124.500 M665.500 540 H681.500" />
    </g>
    <g fill={SKETCH}>
      <path d="M799 312.500 l-16 -4.500 v9 Z M847.500 312.500 l15 -4.500 v9 Z" />
      <path d="M928.500 370.500 l-4.500 -15 h9 Z M928.500 419 l-4.500 15 h9 Z" />
      <path d="M518 371 l-4.500 15 h9 Z M518 564 l-4.500 -15 h9 Z" />
      <path d="M602.500 516 l-4.500 -15 h9 Z M602.500 564.500 l-4.500 15 h9 Z" />
      <path d="M653.500 618 l16 -4.500 v9 Z M1137.500 618 l-16 -4.500 v9 Z" />
      <path d="M680 489 L696 498 L685 504.500 Z M653.500 553 L671 548.500 L670 558 Z" />
      <circle cx="799" cy="370.500" r="3" />
      <circle cx="847" cy="370.500" r="3" />
      <circle cx="847" cy="419" r="3" />
      <circle cx="1137" cy="419" r="3" />
      <circle cx="1137" cy="564.500" r="3" />
      <circle cx="653.500" cy="564.500" r="3" />
      <circle cx="653.500" cy="516" r="3" />
    </g>
    <Dim x={738} y={305} a={180}>1 mm</Dim>
    <Dim x={920} y={611} a={180}>10 mm</Dim>
    <Dim x={936} y={315} a={-90}>1 mm</Dim>
    <Dim x={526} y={459} a={-90}>4 mm</Dim>
    <Dim x={610} y={467} a={-90}>1 mm</Dim>
    <Dim x={696} y={530} a={-90}>135 °</Dim>

    <path d="M1879.500 1003 V982" stroke="#1c1c8c" strokeWidth="1.500" />
    <path d="M1879.500 976 l-3.500 9 h7 Z" fill="#1c1c8c" />
    <path d="M1880 1003.500 H1900" stroke="#2f861d" strokeWidth="1.500" />
    <path d="M1907 1003.500 l-9 -3.500 v7 Z" fill="#2f861d" />
    <path d="M1879.500 999 l4 4.500 l-4 4 l-4 -4 Z" fill="#8c1d1d" />
    <g fontSize="7" fontWeight="700" fill="#222">
      <text x="1880" y="975">Z</text>
      <text x="1908" y="1003">Y</text>
      <text x="1879" y="1003">X</text>
    </g>
  </Scene>
);

const Cube = () => (
  <NavCube width="100" height="100" viewBox="0 0 100 100" fill="#fff" fillOpacity="0.950" stroke="#bdbdbd" strokeWidth="0.800">
    <path d="M52 4.500 L60 13.500 H44 Z M52 92 L60 83.500 H44 Z M8.500 48 L17.500 40 V56 Z" />
    <path d="M40 9.500 C33 11 27 15 24.500 19 L22 17.500 L20 27.500 L29 23 L26.500 21.500 C30 17 35 14.500 41 13.500 Z" />
    <path d="M64 9.500 C71 11 77 15 80 19 L83 17.500 L84.500 27.500 L75 23 L77.500 21.500 C74 17 69 14.500 64 13.500 Z" />
    <path d="M95.500 48 L87.500 40 V56 Z M86 10 a4 4 0 1 0 8 0 a4 4 0 1 0 -8 0 Z" fill="#f5eccb" />
    <path d="M36.500 27 H67.500 L73.500 33 V64 L67.500 70 H36.500 L31 64 V33 Z" />
    <path d="M37 37 L42 32.500 H62.500 L67.500 37 V59 L62.500 63.500 H42 L37 59 Z M31 37 H37 M31 59 H37 M67.500 37 H73.500 M67.500 59 H73.500 M41.500 27 V32.500 M62.500 27 V32.500 M41.500 63.500 V70 M62.500 63.500 V70" fill="none" />
    <path d="M75 76 L82 73 L88.500 76 V83.500 L82 86 L75 83.500 Z M75 76 L82 78.500 L88.500 76 M82 78.500 V86" />
    <path d="M28.500 37 V71.500" stroke="#8a8af5" strokeWidth="1" />
    <path d="M29 71.500 H63.500" stroke="#7ff07f" strokeWidth="1" />
    <text x="52" y="51.500" textAnchor="middle" fontSize="9" fill="#b9b9b9" stroke="none">RIGHT</text>
  </NavCube>
);

const CloseMark = () => (
  <svg width="12" height="12" viewBox="0 0 12 12" stroke="currentColor" strokeWidth="1.200" aria-hidden="true">
    <path d="M1 1 L11 11 M11 1 L1 11" />
  </svg>
);

export default function App() {
  return (
    <Window>
      <GlobalStyle />
      <Header>
        <TitleBar>
          <Lights>
            <Light $fill="#ed6a5f" aria-label="Close window"><LightDot /></Light>
            <Light $fill="#f5bf4f" aria-label="Minimize" />
            <Light $fill="#62c655" aria-label="Zoom" />
          </Lights>
          <Title>smars_base - FreeCAD 1.0.2</Title>
          <span />
        </TitleBar>
        <ToolRow>
          <Tools items={fileTools} />
          <Workbench>
            <Svg s={24}><SketchMark /></Svg>
            <WorkbenchSelect aria-label="Workbench" defaultValue="Sketcher">
              <option>Sketcher</option>
            </WorkbenchSelect>
            <Stepper viewBox="0 0 22 22" fill="none">
              <rect width="22" height="22" rx="5" fill="#3b85ff" />
              <path d="M7.500 8.500 L11 5 L14.500 8.500 M7.500 13.500 L11 17 L14.500 13.500" stroke="#fff" strokeWidth="1.800" />
            </Stepper>
          </Workbench>
          <Tools items={macroTools} />
        </ToolRow>
        <ToolRow><Tools items={viewTools} /></ToolRow>
        <ToolRow><Tools items={constraintTools} /></ToolRow>
        <ToolRow><Tools items={geometryTools} /></ToolRow>
      </Header>

      <Body>
        <Side>
          <TabStrip>
            <StripFill />
            <Tabs>
              <Tab $width={80}>Model</Tab>
              <PencilTab $active $width={135}>
                <svg width="20" height="20" viewBox="0 0 20 20" fill="none" aria-hidden="true">
                  <path d="M1 4 L5 1 L17 13 L19 19 L13 17 Z" fill="#2b4d75" stroke="#14202e" />
                  <path d="M3 3 L15 15" stroke="#6f9cc9" />
                  <path d="M13 16 L17 13 L19 19 Z" fill="#f4f4f4" stroke="#14202e" />
                </svg>
                Tasks
              </PencilTab>
            </Tabs>
            <StripFill />
          </TabStrip>
          <DockTitle>
            <h2>Tasks</h2>
            <DockButtons>
              <DockButton aria-label="Overlay">
                <svg width="17" height="17" viewBox="0 0 17 17" fill="none" stroke="#6b6b6b">
                  <rect x="1.500" y="1.500" width="14" height="14" />
                  <path d="M1.500 6.500 H15.500" />
                </svg>
              </DockButton>
              <DockButton aria-label="Float">
                <svg width="17" height="17" viewBox="0 0 17 17" fill="none" stroke="#6b6b6b">
                  <path d="M6.500 6 V1.500 H15.500 V10.500 H11.500" />
                  <rect x="1.500" y="6.500" width="9" height="9" />
                </svg>
              </DockButton>
            </DockButtons>
          </DockTitle>
          <Panel>
            <CloseButton>Close</CloseButton>
            <Section><Svg s={23}><SketchMark /></Svg>Solver messages</Section>
            <Section>
              <Svg s={23}>
                <L d="M5 28 L28 4" />
                <path d="M7 14 L18 5" stroke={RED} strokeWidth="4" />
                <P d="M2 19 L5 9 L12 15 Z M21 2 L13 4 L19 11 Z" f={RED} s="#7d0a05" />
                <L d="M30 29 H14 L27 14 M20 22 C23 23 25 26 25 29" c={RED} o="#7d0a05" w={1.4} />
                <D x={28} y={4} r={3.4} /><D x={5} y={28} r={3.4} />
              </Svg>
              Constraints
            </Section>
            <Filters id="constraint-filter" eye />
            <ListBox>
              <Rows $height={262} $inset={9}>
                {constraints.map((k, i) => (
                  <Row key={i}>
                    <label>
                      <Check type="checkbox" defaultChecked />
                      <ConstraintMark><Svg>{marks[k]}</Svg></ConstraintMark>
                      Constraint{i + 1}
                    </label>
                  </Row>
                ))}
              </Rows>
            </ListBox>
            <Section>
              <Svg s={23}>
                <L d="M4 28 L28 4" w={2} />
                <D x={4} y={28} r={3.4} /><D x={28} y={4} r={3.4} />
              </Svg>
              Elements
            </Section>
            <Filters id="element-filter" />
            <ListBox $fill>
              <Rows $height={149} $inset={8}>
                {elements.map((name) => (
                  <Row key={name}>
                    <label>
                      <Check type="checkbox" defaultChecked />
                      <ElementMarks>
                        {lineIcon('#6fd018', '#e2504a', '#e2504a')}
                        {lineIcon('#fff', GREEN, RED)}
                        {lineIcon('#fff', RED, GREEN)}
                      </ElementMarks>
                      <Dash />
                      {name}
                    </label>
                  </Row>
                ))}
              </Rows>
            </ListBox>
          </Panel>
        </Side>

        <Documents>
          <Viewport>
            <SketchView />
            <Cube />
          </Viewport>
          <TabStrip>
            <StripFill />
            <Tabs>
              <DocTab $width={98}><CloseMark />Start</DocTab>
              <DocTab $active $width={240}>
                <CloseMark />
                <DocName />
                <svg width="16" height="20" viewBox="0 0 16 20" fill="none" aria-hidden="true">
                  <path d="M.5 .5 H12 L15.500 4 V19.500 H.5 Z" fill="#f3f3f0" stroke="#333" />
                  <circle cx="10" cy="7" r="4" fill={RED} />
                  <path d="M3 9 L7 7 L11 9 V15 L7 17 L3 15 Z" fill="#2f67ad" stroke="#0f274b" />
                </svg>
                <DocName>smars_bas...</DocName>
              </DocTab>
            </Tabs>
            <StripFill />
          </TabStrip>
        </Documents>
      </Body>
      <StatusBar />
    </Window>
  );
}
